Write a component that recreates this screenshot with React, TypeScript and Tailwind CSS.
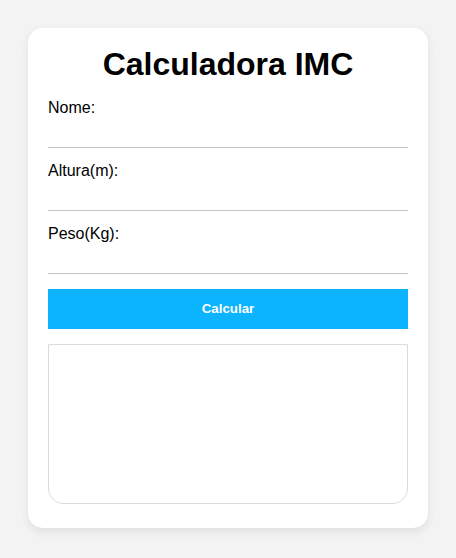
import {FC} from 'react';

const Field: FC<{label: string; id: string}> = ({label, id}) => (
  <div className="mb-[13px]">
    <label htmlFor={id} className="block pt-[1px] text-base leading-[18px] text-black">
      {label}
    </label>
    <input
      id={id}
      type="text"
      className="block w-full h-[31px] border-0 border-b border-[#c2c2c2] bg-transparent outline-none text-base"
    />
  </div>
);

const App: FC = () => {
  return (
    <div
      className="min-h-[558px] bg-[#f3f3f3] pt-[28px] pb-[30px]"
      style={{fontFamily: '"Liberation Sans", Arial, sans-serif'}}
    >
      <div className="mx-auto w-[400px] bg-white rounded-[15px] px-5 pt-5 pb-[24px] shadow-[0_4px_10px_rgba(0,0,0,0.08)]">
        <h1 className="text-[32px] leading-[33px] font-bold text-center text-black mb-[17px]">
          Calculadora IMC
        </h1>
        <Field label="Nome:" id="nome" />
        <Field label="Altura(m):" id="altura" />
        <Field label="Peso(Kg):" id="peso" />
        <button className="mt-[2px] w-full h-10 bg-[#0cb3ff] text-white font-bold text-[13.333px]">
          Calcular
        </button>
        <div className="mt-[15px] h-[160px] border border-[#dcdcdc] rounded-b-[15px]" />
      </div>
    </div>
  );
};

export default App;
